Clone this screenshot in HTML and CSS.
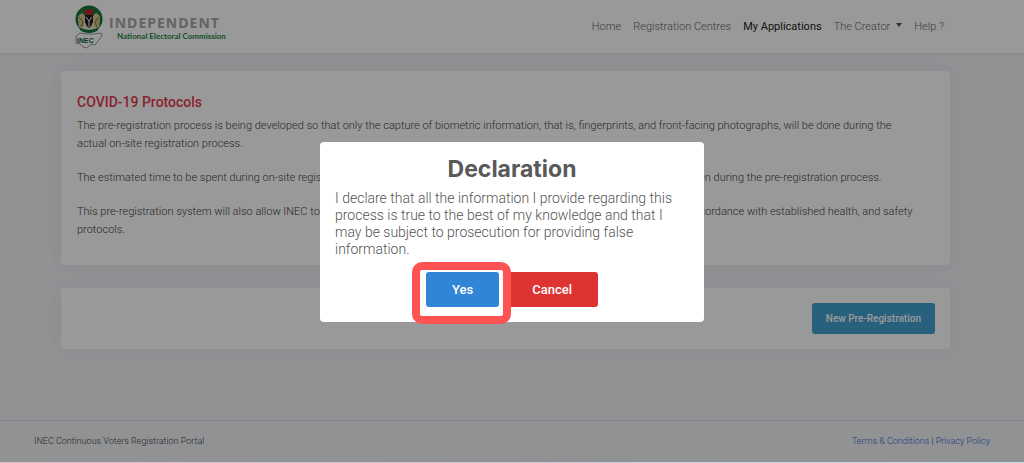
FILE: index.html
```html
<!DOCTYPE html>
<html lang="en">
<head>
    <meta charset="UTF-8">
    <meta name="viewport" content="width=device-width, initial-scale=1.0">
    <title>INEC Continuous Voters Registration Portal</title>
    <link rel="stylesheet" href="styles.css">
</head>
<body>
    <header class="navbar">
        <a class="brand" href="#">
            <svg class="brand-logo" viewBox="0 0 30 44" aria-hidden="true">
                <circle cx="15" cy="14" r="13.5" fill="#16753a"/>
                <path d="M4 12 L8 8 L12 12 H18 L22 8 L26 12 L25 22 Q15 28 5 22Z" fill="#e9e3cc"/>
                <path d="M4 11 L8 8 L11 13 L10 22 L6 23 L5 18Z M26 11 L22 8 L19 13 L20 22 L24 23 L25 18Z" fill="#d8c288"/>
                <path d="M5 12 L9 17 L7 22 M25 12 L21 17 L23 22" fill="none" stroke="#7a6a3c"/>
                <path d="M10 5 L13 4 L15 6 L17 4 L20 5 L18 10 H12Z" fill="#c4202c"/>
                <path d="M11 10 H19 V17 Q18 21 15 23 Q12 21 11 17Z" fill="#1d1d1d"/>
                <path d="M12 12 L15 16 L18 12 M15 16 V22" fill="none" stroke="#fff"/>
                <path d="M5 23 Q15 29 25 23 L23 26 Q15 30 7 26Z" fill="#16753a"/>
                <path d="M2 31 L6 28 L12 29 L20 29 L27 28 L28 31 L24 36 L21 40 L17 39 L13 43 L9 42 L6 39 L2 38Z" fill="#fff" stroke="#999"/>
                <text class="logo-text" x="3" y="38">INEC</text>
            </svg>
            <span class="brand-text">
                <span class="brand-name">INDEPENDENT</span>
                <span class="brand-sub">National Electoral Commission</span>
            </span>
        </a>
        <nav class="nav-links">
            <a href="#">Home</a>
            <a href="#">Registration Centres</a>
            <a class="active" href="#">My Applications</a>
            <a class="dropdown" href="#">The Creator</a>
            <a href="#">Help ?</a>
        </nav>
    </header>

    <main class="content">
        <section class="card protocols">
            <h4>COVID-19 Protocols</h4>
            <p>The pre-registration process is being developed so that only the capture of biometric information, that is, fingerprints, and front-facing photographs, will be done during the actual on-site registration process.</p>
            <p>The estimated time to be spent during on-site registration will be 5 minutes per person, as all of the other details will have been given during the pre-registration process.</p>
            <p>This pre-registration system will also allow INEC to schedule and manage the total number of persons at each of the centres, in accordance with established health, and safety protocols.</p>
        </section>
        <section class="card actions">
            <button class="btn-new" type="button">New Pre-Registration</button>
        </section>
    </main>

    <footer class="footer">
        <span>INEC Continuous Voters Registration Portal</span>
        <span><a href="#">Terms &amp; Conditions</a> | <a href="#">Privacy Policy</a></span>
    </footer>

    <div class="overlay">
        <div class="modal" role="dialog" aria-modal="true" aria-labelledby="modal-title">
            <h2 id="modal-title">Declaration</h2>
            <p>I declare that all the information I provide regarding this process is true to the best of my knowledge and that I may be subject to prosecution for providing false information.</p>
            <div class="modal-actions">
                <button class="btn-yes" type="button">Yes</button>
                <button class="btn-cancel" type="button">Cancel</button>
            </div>
        </div>
    </div>
</body>
</html>
```

FILE: styles.css
```css
* {
    box-sizing: border-box;
}

body {
    margin: 0;
    min-height: 100vh;
    display: flex;
    flex-direction: column;
    background-color: #f1f3f6;
    color: #444;
    font-family: Roboto, Arial, sans-serif;
    font-size: 11px;
    font-weight: 300;
}

a {
    color: #3567d6;
    text-decoration: none;
}

button {
    border: none;
    border-radius: 3px;
    color: #fff;
    font-family: inherit;
    font-weight: 500;
    cursor: pointer;
}

/* top bar */
.navbar {
    display: flex;
    justify-content: space-between;
    align-items: center;
    height: 53px;
    padding: 0 80px 0 74px;
    background-color: #fff;
    box-shadow: 0 1px 4px rgba(60, 70, 100, 0.1);
}

.brand {
    display: flex;
    align-items: center;
    gap: 5px;
}

.brand-logo {
    width: 30px;
    height: 44px;
}

.logo-text {
    font: bold 7px "Liberation Sans", sans-serif;
    fill: #145c2c;
}

.brand-text {
    display: flex;
    flex-direction: column;
    padding-top: 4px;
}

.brand-name {
    color: #a5a5a5;
    font: bold 14px/15px "Open Sans", sans-serif;
    letter-spacing: 1px;
}

.brand-sub {
    padding-left: 8px;
    color: #17863b;
    font: bold 8px/13px Lato, sans-serif;
}

.nav-links {
    display: flex;
    gap: 12px;
}

.nav-links a {
    color: #666;
}

.nav-links .active {
    color: #222;
    font-weight: 400;
}

.dropdown::after {
    content: "";
    display: inline-block;
    margin-left: 6px;
    vertical-align: 3px;
    border-top: 4px solid #555;
    border-left: 3px solid transparent;
    border-right: 3px solid transparent;
}

/* cards */
.content {
    flex: 1;
    display: flex;
    flex-direction: column;
    gap: 23px;
    padding: 18px 74px 0 61px;
}

.card {
    padding: 15px;
    border-radius: 3px;
    background-color: #fff;
    box-shadow: 0 0 16px rgba(60, 70, 100, 0.06);
}

.protocols {
    padding: 22px 28px 10px 16px;
}

.protocols h4 {
    margin: 0 0 6px;
    color: #e8374f;
    font-size: 14px;
    font-weight: 500;
    line-height: 18px;
}

.protocols p {
    margin: 0 0 16px;
    line-height: 18px;
}

.actions {
    display: flex;
    justify-content: flex-end;
}

.btn-new {
    height: 31px;
    padding: 0 14px;
    background-color: #43a2d2;
    font-size: 10px;
}

/* footer */
.footer {
    display: flex;
    justify-content: space-between;
    padding: 14px 34px 15px;
    border-top: 1px solid #dcdfe8;
    font-size: 9px;
    line-height: 13px;
}

/* declaration dialog */
.overlay {
    position: fixed;
    inset: 0;
    display: flex;
    align-items: center;
    justify-content: center;
    background-color: rgba(0, 0, 0, 0.4);
}

.overlay::after {
    content: "";
    position: absolute;
    left: 0;
    right: 0;
    bottom: 0;
    height: 1px;
    background: linear-gradient(to right, #d9bcc8, #c2d9e0);
}

.modal {
    width: 384px;
    padding: 14px 15px 15px;
    border-radius: 4px;
    background-color: #fff;
}

.modal h2 {
    margin: 0 0 8px;
    color: #595959;
    font-family: Inter, sans-serif;
    font-size: 23px;
    font-weight: 700;
    line-height: 26px;
    text-align: center;
}

.modal p {
    margin: 0 0 14px;
    color: #545454;
    font-size: 14px;
    line-height: 17px;
}

.modal-actions {
    display: flex;
    justify-content: center;
    gap: 7px;
}

.modal-actions button {
    height: 35px;
    padding: 0 26px;
    font-size: 13px;
}

.modal-actions .btn-yes {
    position: relative;
    z-index: 1;
    background-color: #3085d6;
}

/* highlight ring around the confirm button */
.btn-yes::after {
    content: "";
    position: absolute;
    inset: -10px -12px -17px -14px;
    border: 8px solid #fd5353;
    border-radius: 10px;
    box-shadow: inset 0 0 0 2px #fff;
}

.btn-cancel {
    background-color: #d33;
}
```
